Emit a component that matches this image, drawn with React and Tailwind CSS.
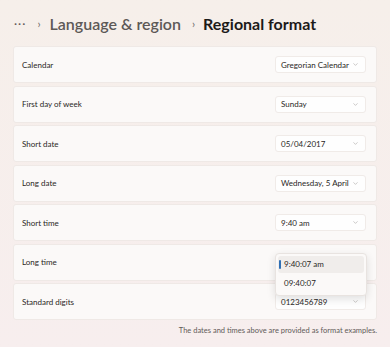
import { ChevronDown } from "lucide-react";

const rows = [
  { label: "Calendar", value: "Gregorian Calendar" },
  { label: "First day of week", value: "Sunday" },
  { label: "Short date", value: "05/04/2017" },
  { label: "Long date", value: "Wednesday, 5 April" },
  { label: "Short time", value: "9:40 am" },
  { label: "Long time", value: "9:40:07 am", open: true },
  { label: "Standard digits", value: "0123456789" },
];

const Row = ({ label, value, open }) => (
  <div className="relative flex h-[37px] items-center justify-between rounded-[3px] border border-[#efe9e6] bg-[#fbf9f8] pl-[8px] pr-[10px]">
    <span className="whitespace-nowrap text-[8px] text-[#2a2725]">{label}</span>
    {open ? (
      <div className="absolute right-[9px] top-[8px] z-10 w-[92px] rounded-[4px] border border-[#e8e3e0] bg-[#fbf9f8] p-[2px] shadow-[0_3px_8px_rgba(0,0,0,0.12)]">
        <div className="relative flex h-[17px] items-center rounded-[3px] bg-[#f0edeb] pl-[6px] text-[8px] text-[#2a2725]">
          <span className="absolute left-[1px] top-[4px] h-[9px] w-[2px] rounded-full bg-[#2f6fb5]" />
          9:40:07 am
        </div>
        <div className="flex h-[20px] items-center pl-[6px] text-[8px] text-[#2a2725]">
          09:40:07
        </div>
      </div>
    ) : (
      <div className="flex h-[17px] w-[91px] items-center justify-between rounded-[3px] border border-[#f0ebe8] bg-[#fefefe] pl-[5px] pr-[6px]">
        <span className="whitespace-nowrap text-[8px] text-[#2a2725]">{value}</span>
        <ChevronDown size={7} strokeWidth={1.5} className="text-[#8a8683]" />
      </div>
    )}
  </div>
);

export default function App() {
  return (
    <div
      className="h-[347px] w-[390px] bg-gradient-to-b from-[#f6efea] to-[#f7eeee] px-[13px]"
      style={{ fontFamily: 'Lato, "Noto Sans", sans-serif' }}
    >
      <div className="flex h-[46px] items-center whitespace-nowrap pl-[1px] pt-[2px]">
        <span className="text-[12px] tracking-[1px] text-[#5f5b58]">···</span>
        <span className="ml-[11px] text-[11px] text-[#6b6764]">›</span>
        <span className="ml-[9px] text-[16px] font-semibold text-[#5d5957]">Language &amp; region</span>
        <span className="ml-[11px] text-[11px] text-[#6b6764]">›</span>
        <span className="ml-[8px] text-[16px] font-bold text-[#1c1a19]">Regional format</span>
      </div>
      <div className="flex flex-col gap-[2.5px]">
        {rows.map((r) => (
          <Row key={r.label} {...r} />
        ))}
      </div>
      <p className="mt-[5px] whitespace-nowrap text-right text-[7.5px] text-[#5f5b58]">
        The dates and times above are provided as format examples.
      </p>
    </div>
  );
}
